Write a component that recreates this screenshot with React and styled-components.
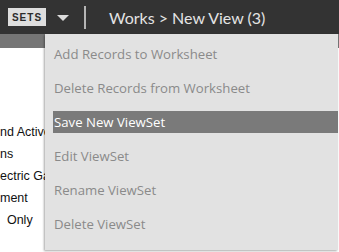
import React from "react";
import styled, { createGlobalStyle } from "styled-components";

const Global = createGlobalStyle`
  html, body { margin: 0; padding: 0; background: #fff; overflow: hidden; }
  body { width: 339px; height: 252px; }
`;

const Page = styled.div`
  width: 339px;
  height: 252px;
  display: flex;
  flex-direction: column;
  position: relative;
  overflow: hidden;
`;

const Header = styled.header`
  height: 34px;
  flex: none;
  background: #333333;
  display: flex;
  align-items: center;
  padding-left: 8px;
`;

const SetsBadge = styled.span`
  width: 38px;
  height: 18px;
  background: #dedede;
  color: #2b2b2b;
  font-family: "Liberation Sans", Arial, sans-serif;
  font-weight: 700;
  font-size: 10px;
  letter-spacing: 1px;
  display: flex;
  align-items: center;
  justify-content: center;
`;

const Caret = styled.span`
  margin-left: 11px;
  width: 0;
  height: 0;
  border-left: 6.5px solid transparent;
  border-right: 6.5px solid transparent;
  border-top: 6px solid #dcdcdc;
  margin-top: 1px;
`;

const Divider = styled.span`
  margin-left: 15px;
  width: 2px;
  height: 23px;
  background: #b5b5b5;
`;

const Title = styled.h1`
  margin: 0 0 0 23px;
  font-family: Lato, "Open Sans", sans-serif;
  font-weight: 400;
  font-size: 16px;
  color: #e4e4e4;
  white-space: nowrap;
`;

const Body = styled.div`
  flex: 1;
  display: flex;
  flex-direction: column;
`;

const TabStrip = styled.div`
  height: 14px;
  background: #767676;
`;

const List = styled.ul`
  margin: 0;
  padding: 73px 0 0 0;
  list-style: none;
`;

const ListRow = styled.li`
  height: 22px;
  line-height: 22px;
  font-family: "Liberation Sans", Arial, sans-serif;
  font-size: 12.5px;
  color: #111;
  white-space: pre;
`;

const Menu = styled.div`
  position: absolute;
  left: 45px;
  top: 34px;
  width: 293px;
  height: 216px;
  background: #e2e2e2;
  box-shadow: -1px 1px 2px rgba(0, 0, 0, 0.35);
  display: flex;
  flex-direction: column;
  gap: 12px;
  padding: 9px 0 0 8px;
  box-sizing: border-box;
`;

const MenuItem = styled.div`
  height: 22px;
  line-height: 22px;
  padding-left: 1px;
  font-family: "Open Sans", Lato, sans-serif;
  font-size: 13.2px;
  white-space: nowrap;
  color: ${(p) => (p.$active ? "#ffffff" : "#8a8a8a")};
  background: ${(p) => (p.$active ? "#7a7a7a" : "transparent")};
`;

const items = [
  "Add Records to Worksheet",
  "Delete Records from Worksheet",
  "Save New ViewSet",
  "Edit ViewSet",
  "Rename ViewSet",
  "Delete ViewSet",
];

const rowTails = ["nd Active", "ns", "ectric Ga", "ment", "  Only"];

export default function App() {
  return (
    <>
      <Global />
      <Page>
        <Header>
          <SetsBadge>SETS</SetsBadge>
          <Caret />
          <Divider />
          <Title>Works &gt; New View (3)</Title>
        </Header>
        <Body>
          <TabStrip />
          <List>
            {rowTails.map((r, i) => (
              <ListRow key={i}>{r}</ListRow>
            ))}
          </List>
        </Body>
        <Menu>
          {items.map((t) => (
            <MenuItem key={t} $active={t === "Save New ViewSet"}>
              {t}
            </MenuItem>
          ))}
        </Menu>
      </Page>
    </>
  );
}
